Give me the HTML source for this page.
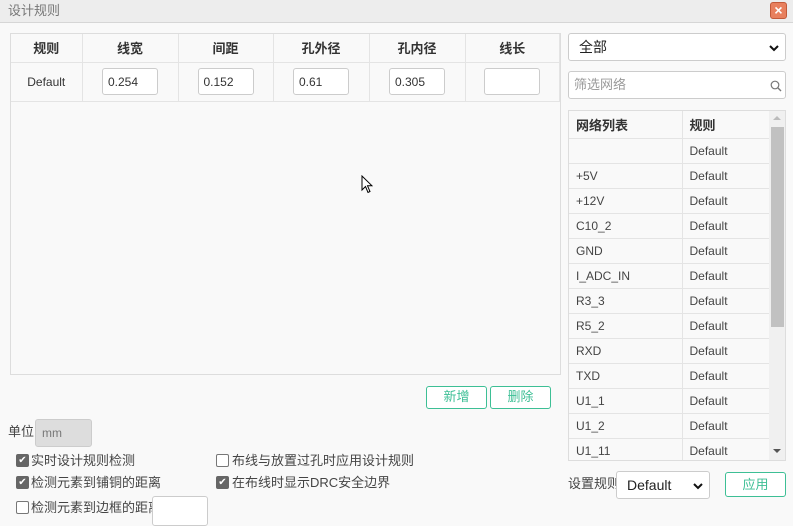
<!DOCTYPE html>
<html><head><meta charset="utf-8"><style>
*{box-sizing:border-box;margin:0;padding:0}
body{width:793px;height:521px;overflow:hidden;background:#f9f9f9;font-family:"Liberation Sans","Noto Sans CJK SC",sans-serif;font-size:13px;color:#333;position:relative}
.abs{position:absolute}
.title{left:0;top:0;width:793px;height:23px;background:#ededed;border-bottom:1px solid #d6d6d6;color:#777;font-size:13px;padding:1px 8px;line-height:20px}
.close{left:770px;top:2px;width:17px;height:17px;background:#e8805e;border:1px solid #c25a3a;border-radius:3px;color:#fff;font-size:14px;line-height:14px;text-align:center;font-weight:bold}
.box{border:1px solid #ddd;background:#f9f9f9}
table{border-collapse:collapse}
.mt td,.mt th{border-right:1px solid #e4e4e4;border-bottom:1px solid #e4e4e4;text-align:center}
.mt th{height:28px;font-weight:bold;font-size:13px}
.mt td{height:39px;font-size:12px}
.inp{display:inline-block;width:56px;height:27px;border:1px solid #ccc;border-radius:3px;background:#fff;text-align:left;padding:6px 5px;font-size:12px;vertical-align:middle}
.nt td{border-right:1px solid #e4e4e4;border-bottom:1px solid #e4e4e4;height:25px;padding-left:7px;font-size:12px;color:#444}
.btn{border:1px solid #3dbf95;border-radius:3px;background:#fff;color:#3dbf95;text-align:center;font-size:13px;line-height:20px}
.cb{width:13px;height:13px;border:1px solid #777;border-radius:2px;background:#fff}
.cb.on{background:#666;border-color:#666;color:#fff;font-size:10px;line-height:11px;text-align:center}
.lbl{font-size:13px;color:#444;line-height:16px}
.chev{position:absolute;right:6px;top:11px}
</style></head><body>
<div class="abs title">设计规则</div>
<div class="abs close">×</div>

<div class="abs box" style="left:10px;top:33px;width:551px;height:342px">
<table class="mt" style="width:549px">
<tr><th style="width:71px">规则</th><th style="width:96px">线宽</th><th style="width:95px">间距</th><th style="width:96px">孔外径</th><th style="width:96px">孔内径</th><th>线长</th></tr>
<tr><td>Default</td><td><span class="inp">0.254</span></td><td><span class="inp">0.152</span></td><td><span class="inp">0.61</span></td><td><span class="inp">0.305</span></td><td><span class="inp"></span></td></tr>
</table>
</div>

<div class="abs btn" style="left:426px;top:386px;width:61px;height:23px">新增</div>
<div class="abs btn" style="left:490px;top:386px;width:61px;height:23px">删除</div>

<div class="abs lbl" style="left:8px;top:424px">单位</div>
<div class="abs" style="left:35px;top:419px;width:57px;height:28px;background:#ddd;border:1px solid #ccc;border-radius:3px;color:#777;padding:6px 6px;font-size:12px">mm</div>

<div class="abs cb on" style="left:16px;top:454px">✔</div><div class="abs lbl" style="left:31px;top:453px">实时设计规则检测</div>
<div class="abs cb" style="left:216px;top:454px"></div><div class="abs lbl" style="left:232px;top:453px">布线与放置过孔时应用设计规则</div>
<div class="abs cb on" style="left:16px;top:476px">✔</div><div class="abs lbl" style="left:31px;top:475px">检测元素到铺铜的距离</div>
<div class="abs cb on" style="left:216px;top:476px">✔</div><div class="abs lbl" style="left:232px;top:475px">在布线时显示DRC安全边界</div>
<div class="abs cb" style="left:16px;top:501px"></div><div class="abs lbl" style="left:31px;top:500px">检测元素到边框的距离</div>
<div class="abs" style="left:152px;top:496px;width:56px;height:30px;background:#fff;border:1px solid #ccc;border-radius:3px"></div>

<div class="abs" style="left:568px;top:33px;width:218px;height:28px;background:#fff;border:1px solid #ccc;border-radius:3px;padding:4px 10px;font-size:14px;color:#222;line-height:18px">全部<svg class="chev" width="10" height="7" viewBox="0 0 10 7"><path d="M1 1 L5 5 L9 1" fill="none" stroke="#111" stroke-width="2"/></svg></div>
<div class="abs" style="left:568px;top:71px;width:218px;height:28px;background:#fff;border:1px solid #ccc;border-radius:3px;padding:5px 5px;font-size:13px;color:#999;line-height:16px">筛选网络
<svg style="position:absolute;right:3px;top:8px" width="12" height="12" viewBox="0 0 12 12"><circle cx="5" cy="5" r="3.8" fill="none" stroke="#777" stroke-width="1.2"/><line x1="7.8" y1="7.8" x2="11" y2="11" stroke="#777" stroke-width="1.4"/></svg></div>

<div class="abs box" style="left:568px;top:110px;width:218px;height:351px;overflow:hidden;background:#f9f9f9">
<table class="nt" style="width:201px">
<tr><td style="width:113px;font-weight:bold;height:27px;color:#333;font-size:13px">网络列表</td><td style="font-weight:bold;color:#333;font-size:13px">规则</td></tr>
<tr><td></td><td>Default</td></tr>
<tr><td>+5V</td><td>Default</td></tr>
<tr><td>+12V</td><td>Default</td></tr>
<tr><td>C10_2</td><td>Default</td></tr>
<tr><td>GND</td><td>Default</td></tr>
<tr><td>I_ADC_IN</td><td>Default</td></tr>
<tr><td>R3_3</td><td>Default</td></tr>
<tr><td>R5_2</td><td>Default</td></tr>
<tr><td>RXD</td><td>Default</td></tr>
<tr><td>TXD</td><td>Default</td></tr>
<tr><td>U1_1</td><td>Default</td></tr>
<tr><td>U1_2</td><td>Default</td></tr>
<tr><td>U1_11</td><td>Default</td></tr>
</table>
<div class="abs" style="left:200px;top:0;width:17px;height:350px;background:#f0f0f0"></div>
<div class="abs" style="left:202px;top:16px;width:13px;height:200px;background:#c1c1c1"></div>
<div class="abs" style="left:204px;top:5px;width:0;height:0;border-left:4px solid transparent;border-right:4px solid transparent;border-bottom:4px solid #bbb"></div>
<div class="abs" style="left:204px;top:338px;width:0;height:0;border-left:4px solid transparent;border-right:4px solid transparent;border-top:4px solid #555"></div>
</div>

<div class="abs lbl" style="left:568px;top:476px">设置规则</div>
<div class="abs" style="left:616px;top:471px;width:94px;height:28px;background:#fff;border:1px solid #ccc;border-radius:3px;padding:4px 10px;font-size:14px;color:#222;line-height:18px">Default<svg class="chev" width="10" height="7" viewBox="0 0 10 7"><path d="M1 1 L5 5 L9 1" fill="none" stroke="#111" stroke-width="2"/></svg></div>
<div class="abs btn" style="left:725px;top:472px;width:61px;height:25px;line-height:23px">应用</div>

<svg class="abs" style="left:361px;top:175px" width="12" height="19" viewBox="0 0 12 19"><path d="M1 1 L1 15 L4.5 11.5 L7 17.5 L9 16.5 L6.5 10.8 L11 10.8 Z" fill="#fff" stroke="#000" stroke-width="1"/></svg>
</body></html>
